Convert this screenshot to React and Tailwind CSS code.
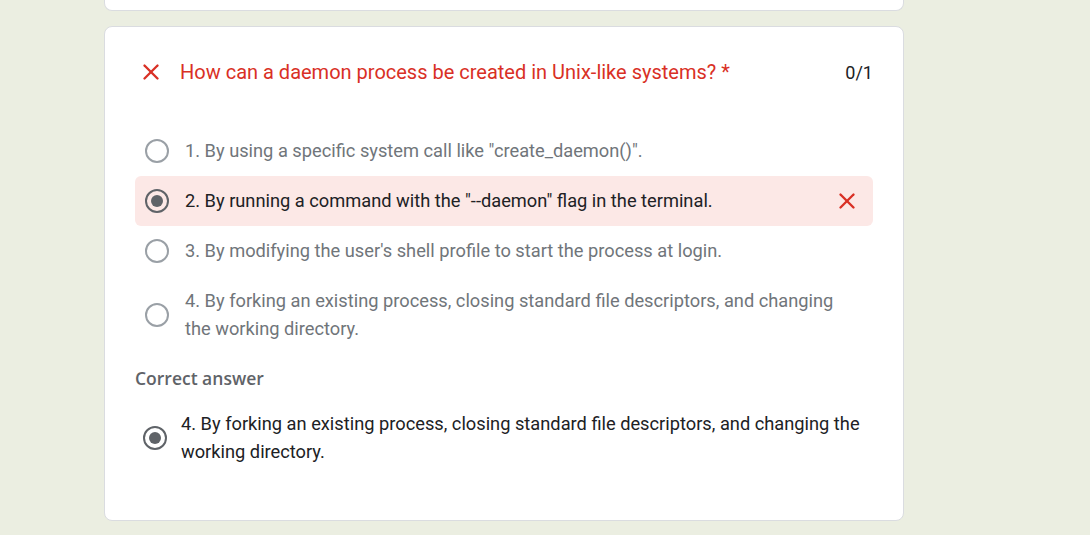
import { X } from "lucide-react";

const options = [
  { n: 1, text: '1. By using a specific system call like "create_daemon()".' },
  { n: 2, text: '2. By running a command with the "--daemon" flag in the terminal.', picked: true },
  { n: 3, text: "3. By modifying the user's shell profile to start the process at login." },
  { n: 4, text: "4. By forking an existing process, closing standard file descriptors, and changing the working directory." },
];

const Radio = ({ checked }) => (
  <div
    className={`w-6 h-6 rounded-full border-2 flex items-center justify-center flex-shrink-0 ${
      checked ? "border-[#5f6368]" : "border-[#9aa0a6]"
    }`}
  >
    {checked && <div className="w-3 h-3 rounded-full bg-[#5f6368]" />}
  </div>
);

export default function App() {
  return (
    <div
      className="min-h-screen bg-[#ebeee1] pl-[104px]"
      style={{ fontFamily: "Roboto, 'Liberation Sans', sans-serif" }}
    >
      <div className="w-[800px] h-[11px] bg-white border-x border-b border-[#dadce0] rounded-b-lg" />

      <div className="w-[800px] mt-[15px] bg-white border border-[#dadce0] rounded-lg px-[30px] pt-[21px] pb-[54px]">
        {/* Question header */}
        <div className="flex items-center h-[48px]">
          <div className="w-[45px] pl-[3px] flex items-center">
            <X size={26} strokeWidth={2.2} className="text-[#d93025]" />
          </div>
          <h2 className="flex-1 text-[20px] leading-6 text-[#d93025]">
            How can a daemon process be created in Unix-like systems? *
          </h2>
          <span className="text-[18px] text-[#202124]">0/1</span>
        </div>

        {/* Options */}
        <div className="mt-[30px]">
          {options.map((o) => (
            <div
              key={o.n}
              className={`flex items-center gap-4 pl-[10px] pr-[13px] py-[11px] rounded-md ${
                o.picked ? "bg-[#fce8e6]" : ""
              }`}
            >
              <Radio checked={o.picked} />
              <p
                className={`flex-1 text-[18.25px] leading-7 ${
                  o.picked ? "text-[#202124]" : "text-[#70757a]"
                }`}
              >
                {o.text}
              </p>
              {o.picked && <X size={26} strokeWidth={2.2} className="text-[#d93025]" />}
            </div>
          ))}
        </div>

        {/* Correct answer */}
        <p
          className="mt-[12px] text-[17.5px] leading-6 font-semibold text-[#5f6368]"
          style={{ fontFamily: "'Open Sans', Roboto, sans-serif" }}
        >
          Correct answer
        </p>
        <div className="flex items-center gap-[14px] pl-[8px] mt-[20px]">
          <Radio checked />
          <p className="flex-1 text-[18.25px] leading-7 text-[#202124]">
            4. By forking an existing process, closing standard file descriptors, and changing the working directory.
          </p>
        </div>
      </div>
    </div>
  );
}
